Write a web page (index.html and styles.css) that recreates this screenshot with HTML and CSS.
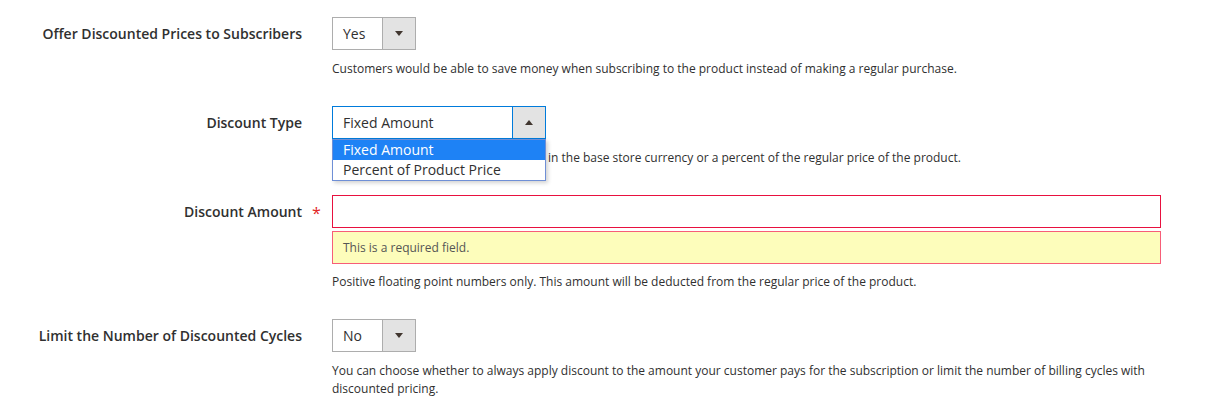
FILE: index.html
```html
<!DOCTYPE html>
<html lang="en">
<head>
<meta charset="utf-8">
<title>Subscription discount</title>
<link rel="stylesheet" href="styles.css">
</head>
<body>
<div class="form">
  <div class="field">
    <div class="label">Offer Discounted Prices to Subscribers</div>
    <div class="mark"></div>
    <div class="control">
      <div class="select small"><span class="value">Yes</span><span class="arrow"><span class="tri down"></span></span></div>
      <div class="note">Customers would be able to save money when subscribing to the product instead of making a regular purchase.</div>
    </div>
  </div>

  <div class="field">
    <div class="label">Discount Type</div>
    <div class="mark"></div>
    <div class="control">
      <div class="select-wrap">
        <div class="select wide focused"><span class="value">Fixed Amount</span><span class="arrow"><span class="tri up"></span></span></div>
        <ul class="options">
          <li class="option active">Fixed Amount</li>
          <li class="option">Percent of Product Price</li>
        </ul>
      </div>
      <div class="note"><span class="covered">Choose a discount as a fixed amount</span>in the base store currency or a percent of the regular price of the product.</div>
    </div>
  </div>

  <div class="field">
    <div class="label">Discount Amount</div>
    <div class="mark"><span class="req">*</span></div>
    <div class="control">
      <div class="input error"></div>
      <div class="field-error">This is a required field.</div>
      <div class="note">Positive floating point numbers only. This amount will be deducted from the regular price of the product.</div>
    </div>
  </div>

  <div class="field">
    <div class="label">Limit the Number of Discounted Cycles</div>
    <div class="mark"></div>
    <div class="control">
      <div class="select small"><span class="value">No</span><span class="arrow"><span class="tri down"></span></span></div>
      <div class="note">You can choose whether to always apply discount to the amount your customer pays for the subscription or limit the number of billing cycles with discounted pricing.</div>
    </div>
  </div>
</div>
</body>
</html>
```

FILE: styles.css
```css
* { box-sizing: border-box; }
html, body { margin: 0; padding: 0; background: #fff; }
body {
  font-family: "Open Sans", "Noto Sans", "Liberation Sans", sans-serif;
  color: #303030;
  font-size: 14px;
}
.form {
  padding-top: 17px;
  display: flex;
  flex-direction: column;
  gap: 28px;
}
.field {
  display: grid;
  grid-template-columns: 302px 30px 828px;
  align-items: start;
}
.label {
  text-align: right;
  font-weight: 600;
  font-size: 14px;
  line-height: 33px;
  color: #303030;
}
.mark {
  position: relative;
  height: 33px;
}
.req {
  position: absolute;
  left: 10px;
  top: 0;
  line-height: 37px;
  color: #e22626;
  font-size: 16px;
  font-weight: 400;
}
.control { display: flex; flex-direction: column; align-items: flex-start; }
.select {
  display: flex;
  height: 33px;
  border: 1px solid #adadad;
  background: #fff;
}
.select.small { width: 84px; }
.select.wide { width: 214px; }
.select.focused { border-color: #007bdb; }
.select .value {
  flex: 1;
  padding-left: 10px;
  line-height: 31px;
  font-size: 14px;
  color: #303030;
}
.select .arrow {
  width: 33px;
  border-left: 1px solid #adadad;
  background: #e3e3e3;
  display: flex;
  align-items: center;
  justify-content: center;
}
.select.focused .arrow { border-left-color: #007bdb; }
.tri { width: 0; height: 0; border-left: 4px solid transparent; border-right: 4px solid transparent; }
.tri.down { border-top: 5px solid #41362f; }
.tri.up { border-bottom: 5px solid #41362f; }
.select-wrap { position: relative; }
.options {
  position: absolute;
  left: 0;
  top: 33px;
  width: 214px;
  margin: 0;
  padding: 0;
  list-style: none;
  background: #fff;
  border: 1px solid #6f8fd6;
  box-shadow: 2px 2px 4px rgba(0,0,0,0.18);
  z-index: 2;
}
.option {
  height: 20px;
  line-height: 20px;
  padding-left: 10px;
  font-size: 14px;
  color: #303030;
}
.option.active { background: #1e82f5; color: #fff; }
.note {
  margin-top: 10px;
  font-size: 12px;
  line-height: 18px;
  color: #303030;
}
.covered {
  display: inline-block;
  width: 216px;
  overflow: hidden;
  white-space: nowrap;
  vertical-align: top;
}
.input {
  width: 829px;
  height: 33px;
  border: 1px solid #adadad;
  background: #fff;
}
.input.error { border-color: #e8113f; }
.field-error {
  width: 829px;
  margin-top: 3px;
  height: 33px;
  line-height: 31px;
  padding-left: 10px;
  background: #fdfdbb;
  border: 1px solid #f75d78;
  color: #555;
  font-size: 12px;
}
.field-error + .note { margin-top: 9px; }
```
